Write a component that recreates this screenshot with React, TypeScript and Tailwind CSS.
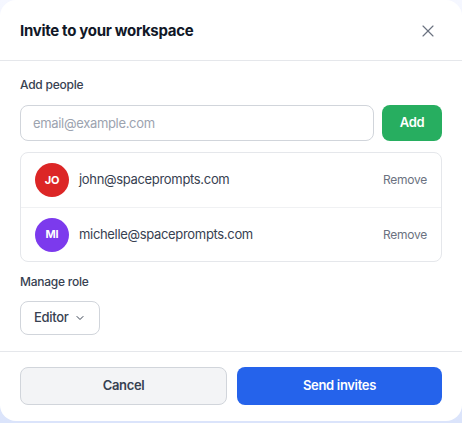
import { X, ChevronDown } from "lucide-react";

const people = [
  { initials: "JO", email: "john@spaceprompts.com", color: "bg-[#dc2626]" },
  { initials: "MI", email: "michelle@spaceprompts.com", color: "bg-[#7c3aed]" },
];

export default function App() {
  return (
    <div className="min-h-[423px] w-[462px] bg-gradient-to-b from-[#f5f7ff] to-[#dbe4fb] font-['Inter',sans-serif]">
      <div className="h-[421px] rounded-2xl bg-white flex flex-col">
        {/* header */}
        <div className="h-[61px] flex items-center justify-between px-5 border-b border-[#e5e7eb]">
          <h2 className="pt-[2px] text-[15px] font-bold text-[#111827] tracking-[-0.02em]">Invite to your workspace</h2>
          <button className="text-[#6b7280] mr-[4px] pt-[2px]">
            <X size={20} strokeWidth={1.4} />
          </button>
        </div>

        {/* body */}
        <div className="px-5 pt-[14px] pb-[16px] border-b border-[#e5e7eb]">
          <div className="text-[12px] leading-5 font-medium text-[#374151] tracking-[-0.02em]">Add people</div>
          <div className="mt-2.5 flex gap-2">
            <input
              type="text"
              placeholder="email@example.com"
              className="flex-1 h-9 rounded-lg border border-[#d1d5db] px-3 text-[13px] tracking-[-0.025em] text-[#374151] placeholder:text-[#9ca3af] outline-none"
            />
            <button className="w-[60px] h-9 rounded-lg bg-[#27ae60] text-white text-[13px] tracking-[-0.025em] font-semibold">Add</button>
          </div>

          <div className="mt-[11px] rounded-lg border border-[#e5e7eb]">
            {people.map((p, i) => (
              <div
                key={p.email}
                className={`h-[54px] flex items-center px-[14px] ${i > 0 ? "border-t border-[#f0f1f3]" : ""}`}
              >
                <div className={`w-[34px] h-[34px] rounded-full ${p.color} text-white text-[11px] font-bold flex items-center justify-center tracking-[-0.02em]`}>
                  {p.initials}
                </div>
                <span className="ml-2.5 text-[13px] tracking-[-0.025em] text-[#374151]">{p.email}</span>
                <button className="ml-auto text-[12px] tracking-[-0.02em] text-[#6b7280]">Remove</button>
              </div>
            ))}
          </div>

          <div className="mt-2.5 text-[12px] leading-5 font-medium text-[#374151] tracking-[-0.02em]">Manage role</div>
          <button className="mt-[9px] h-[34px] w-20 rounded-lg border border-[#d1d5db] flex items-center gap-1.5 pl-[13px] text-[13px] tracking-[-0.025em] font-medium text-[#374151]">
            Editor
            <ChevronDown size={12} strokeWidth={2} />
          </button>
        </div>

        {/* footer */}
        <div className="px-5 pt-[15px] flex gap-2.5">
          <button className="flex-1 h-[38px] rounded-lg border border-[#d1d5db] bg-[#f3f4f6] text-[13px] tracking-[-0.025em] font-semibold text-[#374151]">
            Cancel
          </button>
          <button className="flex-1 h-[38px] rounded-lg bg-[#2563eb] text-[13px] tracking-[-0.025em] font-semibold text-white">
            Send invites
          </button>
        </div>
      </div>
    </div>
  );
}
